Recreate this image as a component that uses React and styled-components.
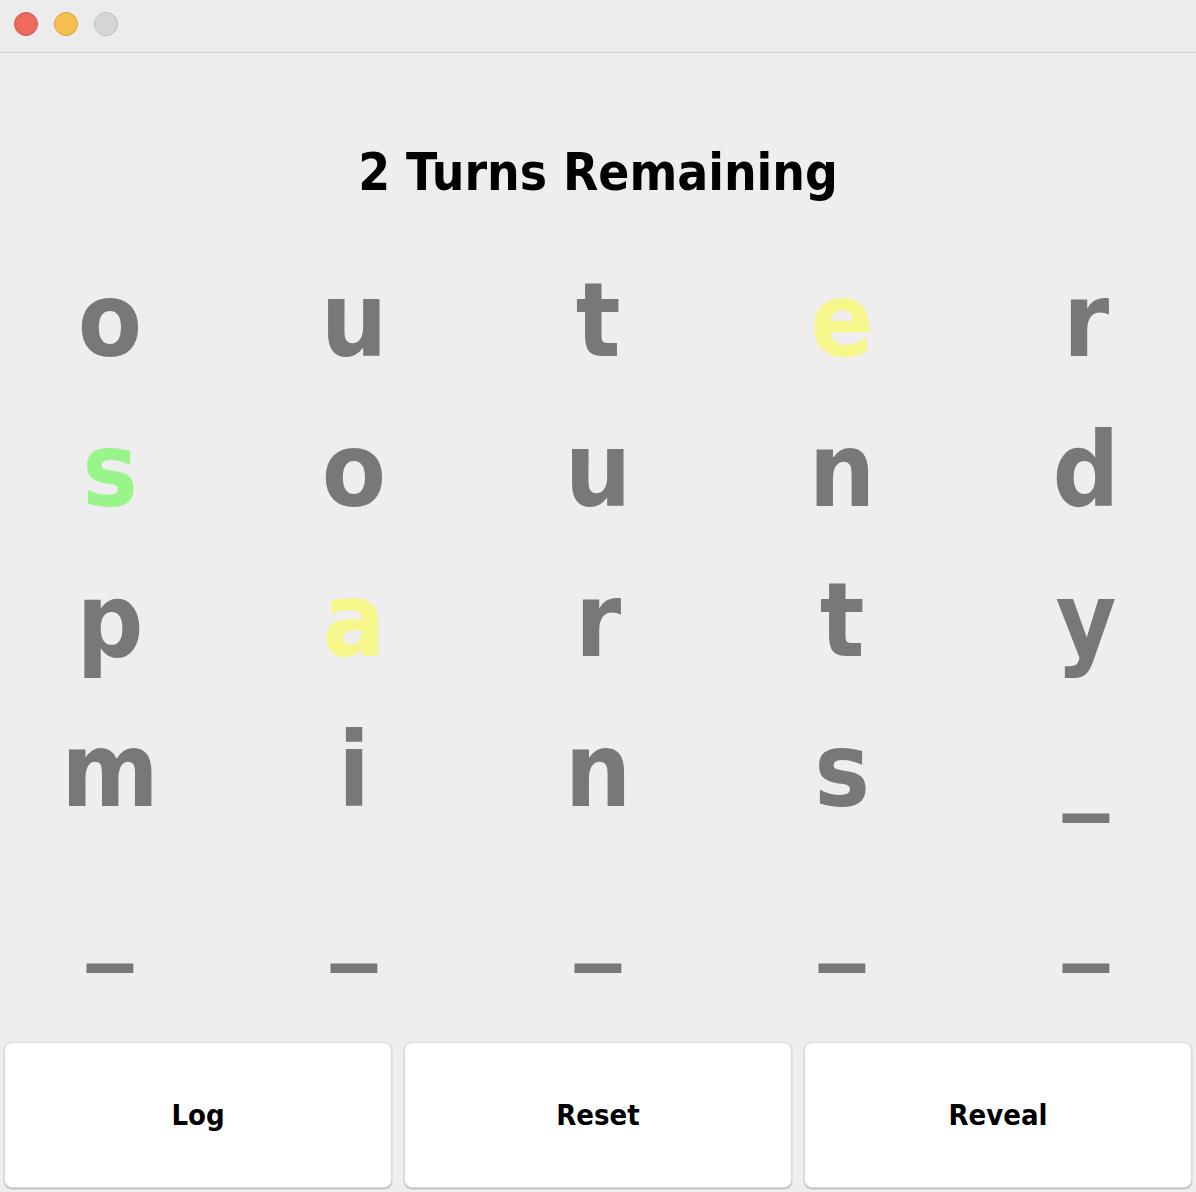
import React from "react";
import styled, { createGlobalStyle } from "styled-components";

const GlobalStyle = createGlobalStyle`
  html, body {
    margin: 0;
    padding: 0;
    background: #eeeeee;
  }
  body {
    font-family: "DejaVu Sans Condensed", "DejaVu Sans", sans-serif;
  }
`;

const Window = styled.div`
  width: 1196px;
  height: 1192px;
  display: flex;
  flex-direction: column;
  background: #eeeeee;
  overflow: hidden;
`;

const TitleBar = styled.div`
  height: 53px;
  flex: none;
  box-sizing: border-box;
  display: flex;
  align-items: center;
  gap: 16px;
  padding: 0 0 5px 14px;
  background: #ececec;
  border-bottom: 1px solid #cdcdcd;
`;

const Light = styled.span`
  width: 24px;
  height: 24px;
  box-sizing: border-box;
  border-radius: 50%;
  background: ${(p) => p.$fill};
  border: 1px solid ${(p) => p.$edge};
`;

const Heading = styled.h1`
  margin: 0;
  padding: 90px 0 42px;
  text-align: center;
  font-family: "DejaVu Sans Condensed", "DejaVu Sans", sans-serif;
  font-weight: 700;
  font-size: 51px;
  line-height: 60px;
  color: #000;
`;

const Board = styled.div`
  display: grid;
  grid-template-columns: repeat(5, 220px);
  grid-auto-rows: 150px;
  column-gap: 24px;
`;

const Tile = styled.div`
  display: flex;
  justify-content: center;
  align-items: center;
  box-sizing: border-box;
  padding-bottom: ${(p) => (p.$blank ? "14px" : "0")};
  font-family: "DejaVu Sans Condensed", "DejaVu Sans", sans-serif;
  font-weight: 700;
  font-size: 104px;
  line-height: 150px;
  color: ${(p) =>
    p.$state === "hit" ? "#99f58a" : p.$state === "near" ? "#f6f68a" : "#787878"};
`;

const ButtonRow = styled.div`
  margin-top: auto;
  display: grid;
  grid-template-columns: repeat(3, 1fr);
  gap: 12px;
  padding: 0 4px 4px;
`;

const ActionButton = styled.button`
  height: 146px;
  border: 1px solid #dadada;
  border-radius: 8px;
  background: #ffffff;
  box-shadow: 0 1px 1.5px rgba(0, 0, 0, 0.28);
  font-family: "DejaVu Sans Condensed", "DejaVu Sans", sans-serif;
  font-weight: 700;
  font-size: 29px;
  color: #000;
  cursor: pointer;
`;

const rows = [
  ["o", "u", "t", "e", "r"],
  ["s", "o", "u", "n", "d"],
  ["p", "a", "r", "t", "y"],
  ["m", "i", "n", "s", "_"],
  ["_", "_", "_", "_", "_"],
];

const states = {
  "0-3": "near",
  "1-0": "hit",
  "2-1": "near",
};

export default function App() {
  return (
    <Window>
      <GlobalStyle />
      <TitleBar>
        <Light $fill="#ee6a5f" $edge="#d5564b" />
        <Light $fill="#f5bf4f" $edge="#dba33a" />
        <Light $fill="#d6d6d6" $edge="#bcbcbc" />
      </TitleBar>
      <Heading>2 Turns Remaining</Heading>
      <Board>
        {rows.map((row, r) =>
          row.map((ch, c) => (
            <Tile
              key={`${r}-${c}`}
              $state={states[`${r}-${c}`]}
              $blank={ch === "_"}
            >
              {ch}
            </Tile>
          ))
        )}
      </Board>
      <ButtonRow>
        <ActionButton>Log</ActionButton>
        <ActionButton>Reset</ActionButton>
        <ActionButton>Reveal</ActionButton>
      </ButtonRow>
    </Window>
  );
}
